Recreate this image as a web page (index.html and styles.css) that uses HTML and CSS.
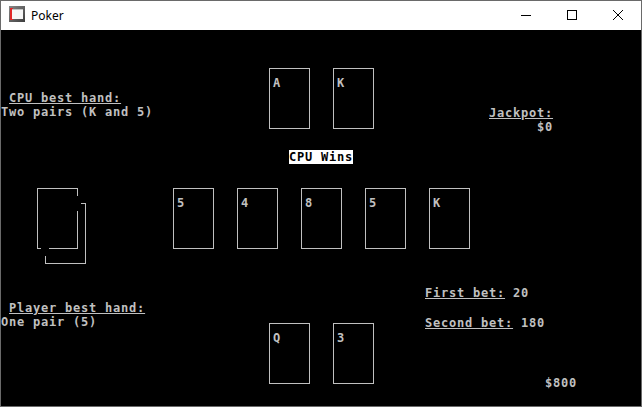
FILE: index.html
```html
<!DOCTYPE html>
<html>
<head>
<meta charset="utf-8">
<title>Poker</title>
<link rel="stylesheet" href="styles.css">
</head>
<body>
<div class="window">
  <div class="titlebar">
    <svg class="app-icon" width="16" height="16" viewBox="0 0 16 16">
      <defs>
        <linearGradient id="g" x1="0" y1="0" x2="1" y2="1">
          <stop offset="0" stop-color="#8a8a8a"/>
          <stop offset="1" stop-color="#3c3c3c"/>
        </linearGradient>
      </defs>
      <rect x="0" y="0" width="16" height="16" fill="url(#g)"/>
      <rect x="1" y="2" width="3" height="12" fill="#e02828"/>
      <rect x="3" y="3" width="11" height="10" fill="#f6f6f6"/>
      <rect x="3" y="3" width="11" height="1" fill="#c4c4c4"/>
    </svg>
    <span class="title">Poker</span>
    <div class="controls">
      <div class="ctl"><svg width="10" height="10" viewBox="0 0 10 10"><rect x="0" y="5" width="10" height="1" fill="#000"/></svg></div>
      <div class="ctl"><svg width="10" height="10" viewBox="0 0 10 10"><rect x="0.5" y="0.5" width="9" height="9" fill="none" stroke="#000"/></svg></div>
      <div class="ctl"><svg width="10" height="10" viewBox="0 0 10 10"><path d="M0 0 L10 10 M10 0 L0 10" stroke="#000" stroke-width="1"/></svg></div>
    </div>
  </div>
  <div class="board">
    <div class="band band-a">
      <div class="col-left pad-a-left">
        <div class="line"> <span class="ul">CPU best hand:</span></div>
        <div class="line">Two pairs (K and 5)</div>
      </div>
      <div class="col-center-a">
        <div class="cards">
          <div class="card"><span class="rank">A</span></div>
          <div class="card"><span class="rank">K</span></div>
        </div>
        <div class="banner"><span class="wins">CPU Wins</span></div>
      </div>
      <div class="col-jackpot">
        <div class="line"><span class="ul">Jackpot:</span></div>
        <div class="line right">$0</div>
      </div>
    </div>
    <div class="band band-b">
      <svg class="deck" width="49" height="76" viewBox="0 0 49 76" shape-rendering="crispEdges">
        <g fill="#c0c0c0">
          <rect x="0" y="0" width="41" height="1"/>
          <rect x="0" y="0" width="1" height="61"/>
          <rect x="40" y="0" width="1" height="8"/>
          <rect x="40" y="23" width="1" height="38"/>
          <rect x="0" y="60" width="4" height="1"/>
          <rect x="12" y="60" width="29" height="1"/>
          <rect x="44" y="15" width="5" height="1"/>
          <rect x="48" y="15" width="1" height="61"/>
          <rect x="8" y="75" width="41" height="1"/>
          <rect x="8" y="68" width="1" height="8"/>
        </g>
      </svg>
      <div class="cards community">
        <div class="card"><span class="rank">5</span></div>
        <div class="card"><span class="rank">4</span></div>
        <div class="card"><span class="rank">8</span></div>
        <div class="card"><span class="rank">5</span></div>
        <div class="card"><span class="rank">K</span></div>
      </div>
    </div>
    <div class="band band-c">
      <div class="col-left pad-c-left">
        <div class="line"> <span class="ul">Player best hand:</span></div>
        <div class="line">One pair (5)</div>
      </div>
      <div class="col-center-c">
        <div class="cards">
          <div class="card"><span class="rank">Q</span></div>
          <div class="card"><span class="rank">3</span></div>
        </div>
      </div>
      <div class="col-bets">
        <div class="line"><span class="ul">First bet:</span> 20</div>
        <div class="line second"><span class="ul">Second bet:</span> 180</div>
        <div class="line money">$800</div>
      </div>
    </div>
  </div>
</div>
</body>
</html>
```
FILE: styles.css
```css
html, body {
  margin: 0;
  padding: 0;
  background: #ffffff;
}

.window {
  width: 640px;
  height: 405px;
  border: 1px solid #6a6a6a;
  display: flex;
  flex-direction: column;
  overflow: hidden;
}

.titlebar {
  height: 29px;
  background: #ffffff;
  display: flex;
  align-items: flex-start;
  flex: none;
}

.app-icon {
  margin: 5px 0 0 8px;
  flex: none;
}

.title {
  margin: 6px 0 0 6px;
  font-family: "Noto Sans", "Open Sans", sans-serif;
  font-size: 12px;
  line-height: 17px;
  color: #000;
}

.controls {
  margin-left: auto;
  display: flex;
}

.ctl {
  width: 46px;
  height: 29px;
  display: flex;
  justify-content: center;
  align-items: flex-start;
  padding-top: 9px;
  box-sizing: border-box;
}

.ctl svg { display: block; }

.board {
  flex: 1;
  background: #000000;
  color: #c0c0c0;
  font-family: "DejaVu Sans Mono", "Liberation Mono", monospace;
  font-size: 12px;
  font-weight: bold;
  letter-spacing: 0.78px;
  display: flex;
  flex-direction: column;
}

.band {
  display: flex;
  align-items: flex-start;
  flex: none;
}

.band-a { height: 158px; }
.band-b { height: 76px; }

.line {
  height: 14px;
  line-height: 14px;
  white-space: pre;
}

.right { text-align: right; }

.ul {
  text-decoration: underline;
  text-decoration-thickness: 1px;
  text-underline-offset: 1px;
}

.col-left {
  width: 268px;
  flex: none;
}

.pad-a-left { padding-top: 61px; }
.pad-c-left { padding-top: 37px; }

.col-center-a {
  width: 220px;
  flex: none;
  padding-top: 38px;
}

.col-jackpot {
  width: 64px;
  flex: none;
  padding-top: 76px;
}

.cards {
  display: flex;
  gap: 23px;
}

.card {
  border: 1px solid #c0c0c0;
  padding: 7px 0 0 3px;
  box-sizing: content-box;
  width: 36px;
  height: 52px;
}

.rank {
  display: block;
  height: 14px;
  line-height: 14px;
}

.banner {
  margin: 21px 0 0 20px;
}

.wins {
  display: inline-block;
  background: #ffffff;
  color: #000000;
  height: 14px;
  line-height: 14px;
  width: 64px;
  white-space: pre;
}

.deck {
  margin-left: 36px;
  flex: none;
  display: block;
}

.community {
  margin-left: 87px;
}

.col-center-c {
  width: 156px;
  flex: none;
  padding-top: 59px;
}

.col-bets {
  flex: none;
  padding-top: 22px;
}

.second { margin-top: 16px; }

.money {
  margin: 46px 0 0 120px;
}
```
